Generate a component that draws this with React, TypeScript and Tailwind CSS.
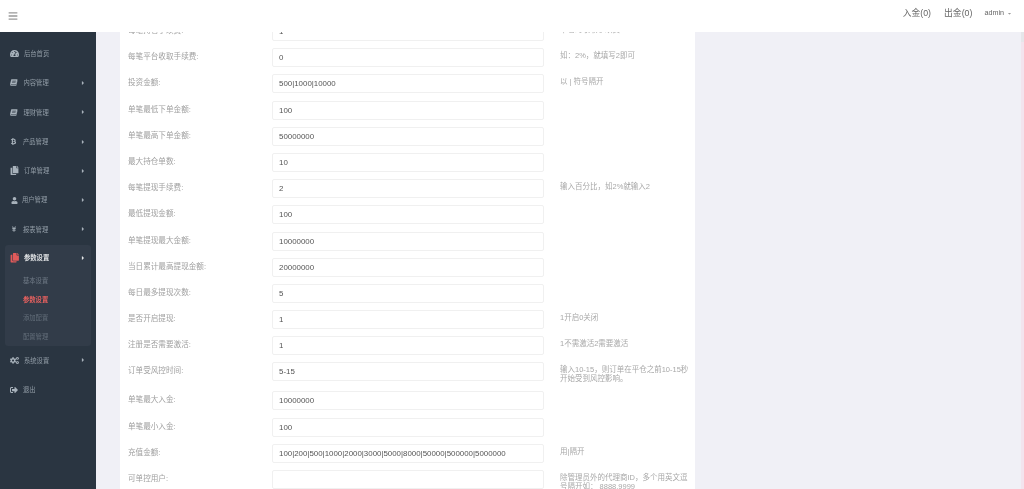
import { FaBars, FaTachometerAlt, FaBtc, FaCopy, FaUser, FaYenSign, FaCogs, FaSignOutAlt, FaCaretRight, FaCaretDown } from "react-icons/fa";

const font = { fontFamily: '"Liberation Sans", "Noto Sans CJK SC", sans-serif' };

// slanted book, the old font-awesome one
const BookIcon = () => (
  <svg viewBox="0 0 16 14" className="w-[7.5px] h-[7px]" fill="currentColor">
    <path d="M3.5 0H16l-2.8 10H1.6C1 10 .9 11 1.5 11H13l3-10v2l-2.5 10.2c-.1.5-.4.8-1 .8H2C.7 14 0 12.8 0 11.5c0-.4 0-.7.2-1.1L2.6.8C2.7.3 3 0 3.5 0zM5 3v1.2h7.5L13 3zm-.8 2.6v1.2h7.5l.4-1.2z" fillRule="evenodd" />
  </svg>
);

const menu = [
  { name: "后台首页", icon: <FaTachometerAlt className="text-[9px]" />, pl: "pl-[10px]", gap: "ml-[5px]" },
  { name: "内容管理", icon: <BookIcon />, arrow: true, pl: "pl-[10px]", gap: "ml-[6px]" },
  { name: "理财管理", icon: <BookIcon />, arrow: true, pl: "pl-[10px]", gap: "ml-[6px]" },
  { name: "产品管理", icon: <FaBtc className="text-[7px]" />, arrow: true, pl: "pl-[10px]", gap: "ml-[6px]" },
  { name: "订单管理", icon: <FaCopy className="text-[9px]" />, arrow: true, pl: "pl-[10px]", gap: "ml-[5px]" },
  { name: "用户管理", icon: <FaUser className="text-[7px]" />, arrow: true, pl: "pl-[11px]", gap: "ml-[4px]" },
  { name: "报表管理", icon: <FaYenSign className="text-[6px]" />, arrow: true, pl: "pl-[11px]", gap: "ml-[6px]" },
];

const subMenu = ["基本设置", "参数设置", "添加配置", "配置管理"];

const rows = [
  { label: "每笔持仓手续费:", value: "1", hint: "平仓时收取手续费" },
  { label: "每笔平台收取手续费:", value: "0", hint: "如：2%，就填写2即可" },
  { label: "投资金额:", value: "500|1000|10000", hint: "以 | 符号隔开" },
  { label: "单笔最低下单金额:", value: "100" },
  { label: "单笔最高下单金额:", value: "50000000" },
  { label: "最大持仓单数:", value: "10" },
  { label: "每笔提现手续费:", value: "2", hint: "输入百分比，如2%就输入2" },
  { label: "最低提现金额:", value: "100" },
  { label: "单笔提现最大金额:", value: "10000000" },
  { label: "当日累计最高提现金额:", value: "20000000" },
  { label: "每日最多提现次数:", value: "5" },
  { label: "是否开启提现:", value: "1", hint: "1开启0关闭" },
  { label: "注册是否需要激活:", value: "1", hint: "1不需激活2需要激活" },
  { label: "订单受风控时间:", value: "5-15", hint: "输入10-15，则订单在平仓之前10-15秒开始受到风控影响。", tall: true },
  { label: "单笔最大入金:", value: "10000000" },
  { label: "单笔最小入金:", value: "100" },
  { label: "充值金额:", value: "100|200|500|1000|2000|3000|5000|8000|50000|500000|5000000", hint: "用|隔开" },
  { label: "可单控用户:", value: "", hint: "除管理员外的代理商ID，多个用英文逗号隔开如： 8888,9999", tall: true },
];

type MenuItemProps = { name: string; icon: React.ReactNode; arrow?: boolean; pl: string; gap: string };

const MenuItem = ({ name, icon, arrow, pl, gap }: MenuItemProps) => (
  <div className={`h-[29.3px] flex items-center pr-[10px] text-[#939ea8] ${pl}`}>
    <span className="text-[#a8b2bb]">{icon}</span>
    <span className={`text-[6.3px] flex-1 ${gap}`}>{name}</span>
    {arrow && <FaCaretRight className="text-[6px] text-[#a8b2bb]" />}
  </div>
);

const FormRow = ({ label, value, hint, tall }: { label: string; value: string; hint?: string; tall?: boolean }) => (
  <div className={`flex items-start ${tall ? "h-[29px]" : "h-[26.2px]"}`}>
    <label className="w-[152px] pl-[8px] pt-[2px] text-[7.6px] leading-[14px] text-[#a0a0a0]">{label}</label>
    <input
      readOnly
      value={value}
      className="w-[272px] h-[19px] bg-white border border-[#f0f0f0] rounded-[2px] px-[6px] text-[7.9px] text-[#555] outline-none"
    />
    <p className="w-[132px] ml-[16px] text-[7.5px] leading-[9px] pt-[3px] text-[#a8a8a8]">
      {hint}
    </p>
  </div>
);

export default function App() {
  return (
    <div className="w-[1024px] h-[489px] overflow-hidden flex flex-col bg-[#f0f0f6] blur-[0.4px]" style={font}>
      <header className="h-[32px] shrink-0 bg-white flex items-center pl-[8px] pr-[12px] z-10">
        <FaBars className="text-[#999] text-[10px] mt-[-1px]" />
        <div className="ml-auto flex items-center pb-[5px] text-[8.8px] text-[#666]">
          <span>入金(0)</span>
          <span className="ml-[13px]">出金(0)</span>
          <span className="ml-[12px] text-[7.2px]">admin</span>
          <FaCaretDown className="ml-[3px] text-[5px] text-[#999]" />
        </div>
      </header>

      <div className="flex flex-1 min-h-0">
        <aside className="w-[96px] shrink-0 bg-[#2a3541] pt-[7px]">
          {menu.map((m) => (
            <MenuItem key={m.name} {...m} />
          ))}
          <div className="mx-[5px] mt-[1px] rounded-[3px] bg-[#323c49]">
            <div className="h-[26px] flex items-center pl-[5px] pr-[5px] text-[#e4e6e8]">
              <FaCopy className="text-[9.5px] text-[#e15a5a]" />
              <span className="ml-[4.5px] text-[6.3px] font-bold flex-1">参数设置</span>
              <FaCaretRight className="text-[6px]" />
            </div>
            {subMenu.map((s, i) => (
              <div key={s} className={`h-[18.7px] pl-[18px] text-[6.3px] leading-[19px] ${i === 1 ? "text-[#e8615f] font-bold" : i === 0 ? "text-[#707b87]" : "text-[#626d79]"}`}>
                {s}
              </div>
            ))}
          </div>
          <MenuItem name="系统设置" icon={<FaCogs className="text-[9px]" />} arrow pl="pl-[10px]" gap="ml-[5px]" />
          <MenuItem name="退出" icon={<FaSignOutAlt className="text-[8px]" />} pl="pl-[10px]" gap="ml-[5px]" />
        </aside>

        <main className="flex-1 min-w-0 overflow-hidden pl-[24px]">
          <div className="w-[575px] bg-white -mt-[10px] h-[600px]">
            {rows.map((r) => (
              <FormRow key={r.label} {...r} />
            ))}
          </div>
        </main>

        {/* page edge strip */}
        <div className="w-[3px] shrink-0 bg-[#f3e4ee]">
          <div className="h-[10px] bg-[#e6e6ea]" />
        </div>
      </div>
    </div>
  );
}
